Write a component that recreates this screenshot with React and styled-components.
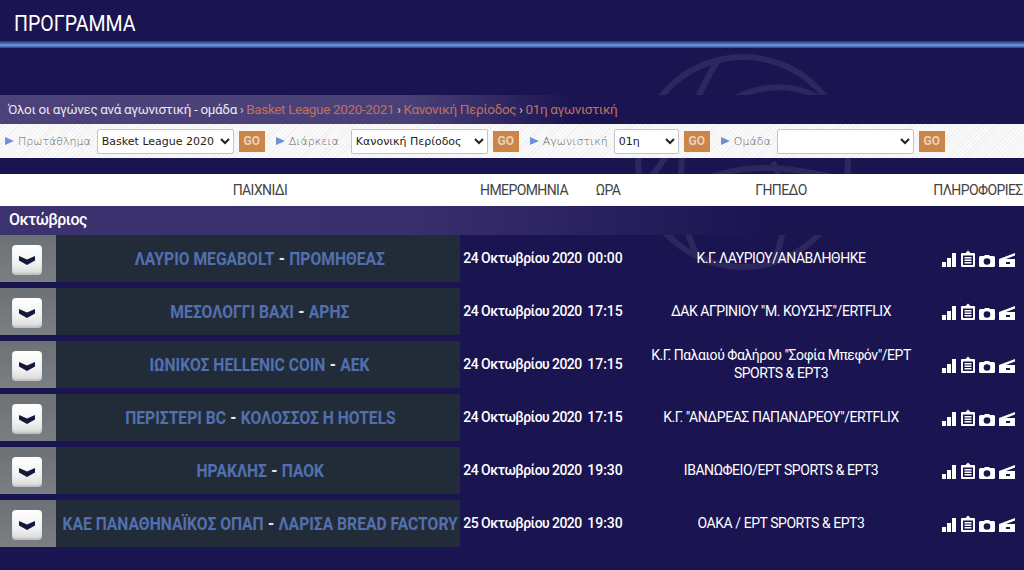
import React from 'react';
import styled, { createGlobalStyle } from 'styled-components';

const matches = [
  { home: 'ΛΑΥΡΙΟ MEGABOLT', away: 'ΠΡΟΜΗΘΕΑΣ', date: '24 Οκτωβρίου 2020', time: '00:00', venue: 'Κ.Γ. ΛΑΥΡΙΟΥ/ΑΝΑΒΛΗΘΗΚΕ' },
  { home: 'ΜΕΣΟΛΟΓΓΙ ΒΑΧΙ', away: 'ΑΡΗΣ', date: '24 Οκτωβρίου 2020', time: '17:15', venue: 'ΔΑΚ ΑΓΡΙΝΙΟΥ "Μ. ΚΟΥΣΗΣ"/ERTFLIX' },
  { home: 'ΙΩΝΙΚΟΣ HELLENIC COIN', away: 'ΑΕΚ', date: '24 Οκτωβρίου 2020', time: '17:15', venue: 'Κ.Γ. Παλαιού Φαλήρου "Σοφία Μπεφόν"/ΕΡΤ SPORTS & ΕΡΤ3' },
  { home: 'ΠΕΡΙΣΤΕΡΙ BC', away: 'ΚΟΛΟΣΣΟΣ Η HOTELS', date: '24 Οκτωβρίου 2020', time: '17:15', venue: 'Κ.Γ. "ΑΝΔΡΕΑΣ ΠΑΠΑΝΔΡΕΟΥ"/ERTFLIX' },
  { home: 'ΗΡΑΚΛΗΣ', away: 'ΠΑΟΚ', date: '24 Οκτωβρίου 2020', time: '19:30', venue: 'ΙΒΑΝΩΦΕΙΟ/ΕΡΤ SPORTS & ΕΡΤ3' },
  { home: 'ΚΑΕ ΠΑΝΑΘΗΝΑΪΚΟΣ ΟΠΑΠ', away: 'ΛΑΡΙΣΑ BREAD FACTORY', date: '25 Οκτωβρίου 2020', time: '19:30', venue: 'ΟΑΚΑ / ΕΡΤ SPORTS & ΕΡΤ3' },
];

const filters = [
  { label: 'Πρωτάθλημα', value: 'Basket League 2020', width: 137, gap: 6 },
  { label: 'Διάρκεια', value: 'Κανονική Περίοδος', width: 137, gap: 12 },
  { label: 'Αγωνιστική', value: '01η', width: 65, gap: 6 },
  { label: 'Ομάδα', value: '', width: 137, gap: 6 },
];

export default function App() {
  return (
    <Page>
      <GlobalStyle />
      <Watermark viewBox="0 0 240 240" fill="none" stroke="#fff" strokeWidth="6">
        <circle cx="120" cy="120" r="105" />
        <path d="M20 150C70 60 150 20 205 62" />
        <path d="M95 18C55 80 45 160 75 215" />
        <path d="M60 150C110 115 170 125 222 138" />
        <path d="M150 120C165 150 165 190 150 220" />
      </Watermark>
      <TopBar><Title>ΠΡΟΓΡΑΜΜΑ</Title></TopBar>
      <BlueLine />
      <Breadcrumb>
        Όλοι οι αγώνες ανά αγωνιστική - ομάδα <Sep>›</Sep> <Crumb>Basket League 2020-2021</Crumb> <Sep>›</Sep>{' '}
        <Crumb>Κανονική Περίοδος</Crumb> <Sep>›</Sep> <Crumb>01η αγωνιστική</Crumb>
      </Breadcrumb>
      <FilterBar>
        {filters.map((f) => (
          <FilterGroup key={f.label}>
            <Arrow />
            <FilterLabel $gap={f.gap}>{f.label}</FilterLabel>
            <Select $width={f.width} defaultValue={f.value}>
              <option value={f.value}>{f.value}</option>
            </Select>
            <GoButton>GO</GoButton>
          </FilterGroup>
        ))}
      </FilterBar>
      <TableHead>
        <HeadGame>ΠΑΙΧΝΙΔΙ</HeadGame>
        <HeadDate>ΗΜΕΡΟΜΗΝΙΑ</HeadDate>
        <HeadTime>ΩΡΑ</HeadTime>
        <HeadVenue>ΓΗΠΕΔΟ</HeadVenue>
        <HeadInfo>ΠΛΗΡΟΦΟΡΙΕΣ</HeadInfo>
      </TableHead>
      <Month>Οκτώβριος</Month>
      <Rows>
        {matches.map((m) => (
          <Row key={m.home}>
            <ToggleCell>
              <Toggle>
                <svg width="18" height="11" viewBox="0 0 18 11">
                  <path d="M1 1l8 3.500L17 1v4.500L9 10 1 5.500z" fill="#14183a" />
                </svg>
              </Toggle>
            </ToggleCell>
            <Game>
              <GameText>
                <Team>{m.home}</Team>
                <Dash>-</Dash>
                <Team>{m.away}</Team>
              </GameText>
            </Game>
            <DateCell>{m.date}</DateCell>
            <TimeCell>{m.time}</TimeCell>
            <VenueCell>{m.venue}</VenueCell>
            <InfoCell>
              <svg width="15" height="14" viewBox="0 0 15 14" fill="#fff">
                <path d="M0 9h4v5H0zM5 5h4v9H5zM10 0h4v14h-4z" />
              </svg>
              <svg width="14" height="17" viewBox="0 0 14 17">
                <path d="M1 3h3.500L7 .5 9.500 3H13a1 1 0 0 1 1 1v12a1 1 0 0 1-1 1H1a1 1 0 0 1-1-1V4a1 1 0 0 1 1-1z" fill="#fff" />
                <path d="M2 5.500h10V15H2z" fill="#1a1450" />
                <path d="M3.500 7h7v1.500h-7zM3.500 9.500h7V11h-7zM3.500 12h7v1.500h-7z" fill="#fff" />
              </svg>
              <svg width="16" height="12" viewBox="0 0 16 12">
                <path d="M1.500 1H5l1-1h4l1 1h3.500A1.500 1.500 0 0 1 16 2.500v8a1.500 1.500 0 0 1-1.500 1.500h-13A1.500 1.500 0 0 1 0 10.500v-8A1.500 1.500 0 0 1 1.500 1z" fill="#fff" />
                <circle cx="8" cy="6.500" r="3.300" fill="#1a1450" />
              </svg>
              <svg width="16" height="14" viewBox="0 0 16 14">
                <path d="M16 0v2.500L7 6h9v8H0V6z" fill="#fff" />
                <rect x="7" y="9" width="4" height="2" fill="#1a1450" />
              </svg>
            </InfoCell>
          </Row>
        ))}
      </Rows>
    </Page>
  );
}

const GlobalStyle = createGlobalStyle`
  html, body {
    margin: 0;
    padding: 0;
    background: #1a1450;
  }
  * {
    box-sizing: border-box;
  }
`;

const Page = styled.div`
  position: relative;
  width: 1024px;
  height: 570px;
  overflow: hidden;
  background: #1a1450;
  font-family: Roboto, "Noto Sans", sans-serif;
`;

const Watermark = styled.svg`
  position: absolute;
  left: 623px;
  top: 42px;
  width: 240px;
  height: 240px;
  opacity: 0.08;
`;

const TopBar = styled.header`
  position: relative;
  height: 41px;
  display: flex;
  align-items: center;
  padding: 6px 0 0 14px;
`;

const Title = styled.h1`
  margin: 0;
  color: #fff;
  font-size: 22px;
  font-weight: 400;
  transform: scaleX(0.89);
  transform-origin: left center;
`;

const BlueLine = styled.div`
  position: relative;
  height: 7px;
  background: linear-gradient(#27307a 0, #4f7fc4 45%, #6f9fdc 60%, #2b3c86 100%);
`;

const Breadcrumb = styled.div`
  position: relative;
  margin-top: 47px;
  height: 29px;
  padding-left: 8px;
  line-height: 28px;
  color: #e8e6f0;
  font-size: 13.5px;
  letter-spacing: -0.35px;
  white-space: nowrap;
  background: linear-gradient(90deg, #4b4279 0, #4a4078 40%, #1a1450 56%);
`;

const Crumb = styled.span`
  color: #c0705f;
`;

const Sep = styled.span`
  color: #d8d4e4;
  font-size: 12px;
`;

const FilterBar = styled.div`
  position: relative;
  height: 34px;
  display: flex;
  align-items: center;
  padding-left: 5px;
  gap: 11px;
  background: repeating-linear-gradient(135deg, #fafafa 0 2px, #efefef 2px 3px);
`;

const FilterGroup = styled.div`
  display: flex;
  align-items: center;
`;

const Arrow = styled.span`
  width: 0;
  height: 0;
  margin-right: 4px;
  border-left: 9px solid #6f8fd8;
  border-top: 4px solid transparent;
  border-bottom: 4px solid transparent;
`;

const FilterLabel = styled.span`
  margin-right: ${(props) => props.$gap}px;
  color: #5f5f5f;
  font-family: "DejaVu Sans", sans-serif;
  font-size: 11px;
  font-weight: 300;
`;

const Select = styled.select`
  width: ${(props) => props.$width}px;
  height: 25px;
  margin-right: 5px;
  padding-left: 0;
  background: #fff;
  border: 1px solid #c4c4c4;
  border-radius: 2px;
  color: #222;
  font-family: "DejaVu Sans", sans-serif;
  font-size: 11px;
`;

const GoButton = styled.button`
  width: 26px;
  height: 21px;
  padding: 0;
  border: 0;
  background: #cc8547;
  color: #e6d3c0;
  font-family: Roboto, sans-serif;
  font-size: 12px;
  font-weight: 700;
`;

const TableHead = styled.div`
  position: relative;
  margin-top: 16px;
  height: 32px;
  display: flex;
  align-items: center;
  text-align: center;
  background: #fff;
  color: #444;
  font-size: 14px;
  letter-spacing: -0.6px;
`;

const HeadGame = styled.div`
  width: 470px;
  padding-left: 50px;
`;

const HeadDate = styled.div`
  width: 108px;
`;

const HeadTime = styled.div`
  width: 60px;
`;

const HeadVenue = styled.div`
  width: 286px;
`;

const HeadInfo = styled.div`
  width: 100px;
  padding-left: 8px;
  white-space: nowrap;
`;

const Month = styled.div`
  position: relative;
  height: 29px;
  padding-left: 9px;
  line-height: 28px;
  color: #fff;
  font-size: 16px;
  font-weight: 500;
  letter-spacing: -0.6px;
  background: linear-gradient(90deg, #3d3270 0, #3a2f6e 40%, #1a1450 75%);
`;

const Rows = styled.div`
  position: relative;
  display: flex;
  flex-direction: column;
  gap: 6px;
`;

const Row = styled.div`
  height: 47px;
  display: flex;
  align-items: center;
`;

const ToggleCell = styled.div`
  width: 56px;
  height: 100%;
  display: flex;
  align-items: center;
  padding: 3px 0 0 12px;
  background: linear-gradient(#6c7176, #7a7f84);
`;

const Toggle = styled.div`
  width: 30px;
  height: 30px;
  display: flex;
  align-items: center;
  justify-content: center;
  border-radius: 4px;
  background: linear-gradient(#fff 0, #f2f2f2 60%, #d8d8d8 100%);
  box-shadow: inset 0 -2px 2px rgba(0, 0, 0, 0.12);
`;

const Game = styled.div`
  width: 404px;
  height: 100%;
  padding: 0 0 1px 4px;
  display: flex;
  align-items: center;
  justify-content: center;
  background: #222c38;
`;

const GameText = styled.div`
  display: flex;
  gap: 5px;
  font-size: 18px;
  font-weight: 700;
  white-space: nowrap;
  transform: scaleX(0.87);
`;

const Team = styled.span`
  color: #5270b0;
`;

const Dash = styled.span`
  color: #e4e4ea;
`;

const DateCell = styled.div`
  width: 125px;
  margin-bottom: 1px;
  text-align: center;
  color: #fff;
  font-size: 14px;
  font-weight: 500;
  letter-spacing: -0.55px;
  white-space: nowrap;
`;

const TimeCell = styled.div`
  width: 40px;
  margin-bottom: 1px;
  text-align: center;
  color: #fff;
  font-size: 14px;
  font-weight: 500;
`;

const VenueCell = styled.div`
  width: 312px;
  padding: 0 10px;
  margin-bottom: 1px;
  text-align: center;
  color: #fff;
  font-size: 14px;
  line-height: 18px;
  letter-spacing: -0.45px;
`;

const InfoCell = styled.div`
  width: 87px;
  display: flex;
  align-items: flex-end;
  justify-content: flex-start;
  gap: 4px;
  padding-left: 5px;
`;
